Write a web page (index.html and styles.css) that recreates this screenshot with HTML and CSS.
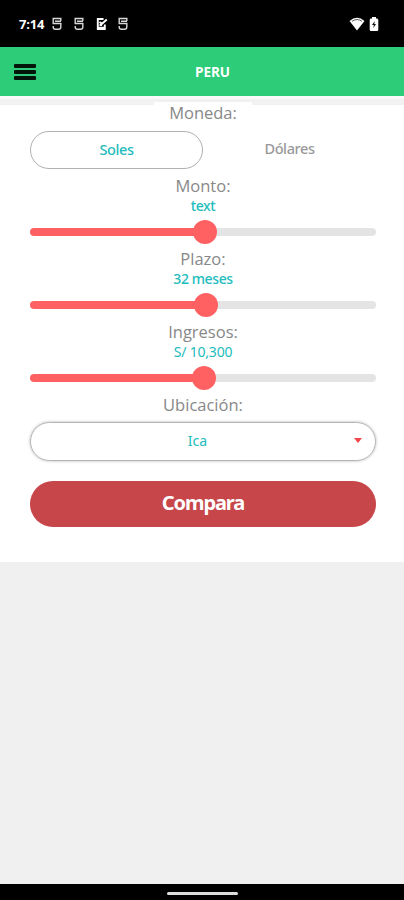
FILE: index.html
```html
<!DOCTYPE html>
<html lang="es">

<head>
    <meta charset="UTF-8">
    <meta name="viewport" content="width=device-width, initial-scale=1.0">
    <title>Peru</title>
    <link rel="stylesheet" href="styles.css">
</head>

<body>
    <div class="status-bar">
        <span class="time">7:14</span>
        <svg class="app-icon" viewBox="0 0 10 14">
            <path d="M8.8 4V1.5H1.2V6.5H8.8V10Q8.8 12.3 6.5 12.3H3.5Q1.2 12.3 1.2 10V9M3 4.2H9" />
        </svg>
        <svg class="app-icon" viewBox="0 0 10 14">
            <path d="M8.8 4V1.5H1.2V6.5H8.8V10Q8.8 12.3 6.5 12.3H3.5Q1.2 12.3 1.2 10V9M3 4.2H9" />
        </svg>
        <svg class="app-icon check" viewBox="0 0 12 14">
            <path d="M7.5 2H1.8V12H8.8V7.5M3.5 5L6 6.8L10.8 2.5M2 10.8H9M3.5 8H6" />
        </svg>
        <svg class="app-icon" viewBox="0 0 10 14">
            <path d="M8.8 4V1.5H1.2V6.5H8.8V10Q8.8 12.3 6.5 12.3H3.5Q1.2 12.3 1.2 10V9M3 4.2H9" />
        </svg>
        <svg class="wifi" viewBox="0 0 16 14">
            <path d="M.5 4Q8-2.5 15.5 4L8 13.5Z" fill="#fff" />
            <path d="M3 4.3Q8 .8 13 4.3" fill="none" stroke="#555" stroke-width="1" />
        </svg>
        <svg class="battery" viewBox="0 0 10 14">
            <path d="M3 0H7V1.5H8Q9.3 1.5 9.3 3V12.5Q9.3 14 8 14H2Q.7 14 .7 12.5V3Q.7 1.5 2 1.5H3Z" fill="#fff" />
            <path d="M5.8 4L3 8H4.8L4.4 11L7 7H5.3Z" fill="#111" />
        </svg>
    </div>

    <header class="header">
        <button type="button" class="menu" aria-label="Menu"><span></span><span></span><span></span></button>
        <h1>PERU</h1>
    </header>

    <form class="form">
        <div class="form-group">
            <label class="currency-label">Moneda:</label>
            <div class="options">
                <button type="button" class="option active">Soles</button>
                <button type="button" class="option">Dólares</button>
            </div>
        </div>
        <div class="form-group">
            <label for="monto">Monto:</label>
            <output class="value">text</output>
            <input type="range" id="monto" min="0" max="1000" value="505">
        </div>
        <div class="form-group">
            <label for="plazo">Plazo:</label>
            <output class="value">32 meses</output>
            <input type="range" id="plazo" min="0" max="1000" value="508">
        </div>
        <div class="form-group">
            <label for="ingresos">Ingresos:</label>
            <output class="value amount">S/ 10,300</output>
            <input type="range" id="ingresos" min="0" max="1000" value="503">
        </div>
        <div class="form-group">
            <label>Ubicación:</label>
            <button type="button" class="select">
                <span>Ica</span>
                <svg class="arrow" viewBox="0 0 8 5">
                    <path d="M0 0H8L4 5Z" fill="#f4474b" />
                </svg>
            </button>
        </div>
        <button type="button" class="btn-submit">Compara</button>
    </form>

    <div class="nav-bar"><span></span></div>
</body>

</html>
```

FILE: styles.css
```css
* {
    box-sizing: border-box;
}

body {
    margin: 0;
    height: 900px;
    display: flex;
    flex-direction: column;
    background: #f0f0f0;
    font-family: 'Open Sans', sans-serif;
    overflow: hidden;
}

button {
    padding: 0;
    border: none;
    background: none;
    font-family: inherit;
}

/* Status bar */
.status-bar {
    height: 47px;
    padding: 1px 25px 0 19px;
    display: flex;
    align-items: center;
    background: #000;
    flex-shrink: 0;
}

.time {
    width: 33px;
    color: #fff;
    font: 700 13px 'Open Sans', sans-serif;
    letter-spacing: -0.2px;
}

.app-icon {
    width: 10px;
    height: 14px;
    margin-right: 12px;
    fill: none;
    stroke: #d8d8d8;
    stroke-width: 1.4;
}

.check {
    width: 12px;
    margin-right: 10px;
    stroke: #fff;
    stroke-width: 1.9;
}

.wifi {
    width: 16px;
    height: 14px;
    margin-left: auto;
}

.battery {
    width: 10px;
    height: 14px;
    margin-left: 4px;
}

/* Header */
.header {
    height: 49px;
    padding: 0 14px;
    display: grid;
    grid-template-columns: 22px 1fr 22px;
    align-items: center;
    background: #2dcc79;
    flex-shrink: 0;
}

.menu {
    display: flex;
    flex-direction: column;
    gap: 2px;
}

.menu span {
    height: 4px;
    border-radius: 1px;
    background: #04150c;
}

.header h1 {
    margin: 0;
    padding-left: 21px;
    text-align: center;
    color: #fff;
    font: 700 13.5px 'Open Sans', sans-serif;
}

/* Form */
.form {
    height: 466px;
    padding: 0 28px 0 30px;
    background: linear-gradient(#fafafa 3px, #f2f2f2 3px, #f2f2f2 9px, #fff 9px);
    flex-shrink: 0;
}

.form-group {
    height: 73px;
    display: flex;
    flex-direction: column;
    align-items: center;
}

.form-group:first-child {
    height: 80px;
    padding-top: 6px;
}

label {
    height: 20px;
    color: #888;
    font-size: 16.5px;
    line-height: 20px;
}

.currency-label {
    width: 98px;
    height: 22px;
    padding-top: 1px;
    text-align: center;
    background: #fff;
}

.options {
    width: 100%;
    margin-top: 7px;
    display: grid;
    grid-template-columns: 1fr 1fr;
}

.option {
    height: 38px;
    padding-bottom: 4px;
    color: #999;
    font: 500 14.5px 'Noto Sans', sans-serif;
    letter-spacing: -0.4px;
}

.active {
    padding-bottom: 2px;
    border: 1px solid #b0b0b0;
    border-radius: 19px;
    color: #22bcbc;
}

.value {
    height: 18px;
    margin-top: 1px;
    color: #22bcbc;
    font: 500 14px/18px 'Noto Sans', sans-serif;
    letter-spacing: -0.4px;
}

.amount {
    font-weight: 400;
    letter-spacing: -0.2px;
}

/* Sliders */
input[type="range"] {
    appearance: none;
    width: 100%;
    height: 24px;
    margin: 5px 0 0;
    background: none;
}

input[type="range"]::-webkit-slider-runnable-track {
    height: 8px;
    border-radius: 4px;
    background: linear-gradient(to right, #ff6062 50%, #e4e4e4 50%);
}

input[type="range"]::-webkit-slider-thumb {
    appearance: none;
    width: 24px;
    height: 24px;
    margin-top: -8px;
    border-radius: 50%;
    background: #ff6062;
}

.select {
    width: 100%;
    height: 39px;
    margin-top: 7px;
    padding: 0 13px 2px 0;
    display: flex;
    align-items: center;
    flex-shrink: 0;
    border: 1px solid #b4b4b4;
    border-radius: 20px;
    box-shadow: 0 0 3px rgba(0, 0, 0, 0.3);
    color: #22bcbc;
    font: 400 14px 'Noto Sans', sans-serif;
}

.select span {
    flex: 1;
    padding-left: 10px;
}

.arrow {
    width: 8px;
    height: 5px;
    margin-bottom: 1px;
}

.btn-submit {
    width: 100%;
    height: 46px;
    margin-top: 13px;
    padding-bottom: 3px;
    border-radius: 23px;
    background: #c64649;
    color: #fff;
    font: 700 20px 'Noto Sans', sans-serif;
    letter-spacing: -1.1px;
}

/* Navigation bar */
.nav-bar {
    height: 16px;
    margin-top: auto;
    display: flex;
    justify-content: center;
    align-items: center;
    background: #000;
}

.nav-bar span {
    width: 71px;
    height: 3px;
    margin-top: 3px;
    border-radius: 2px;
    background: #ddd;
}
```
